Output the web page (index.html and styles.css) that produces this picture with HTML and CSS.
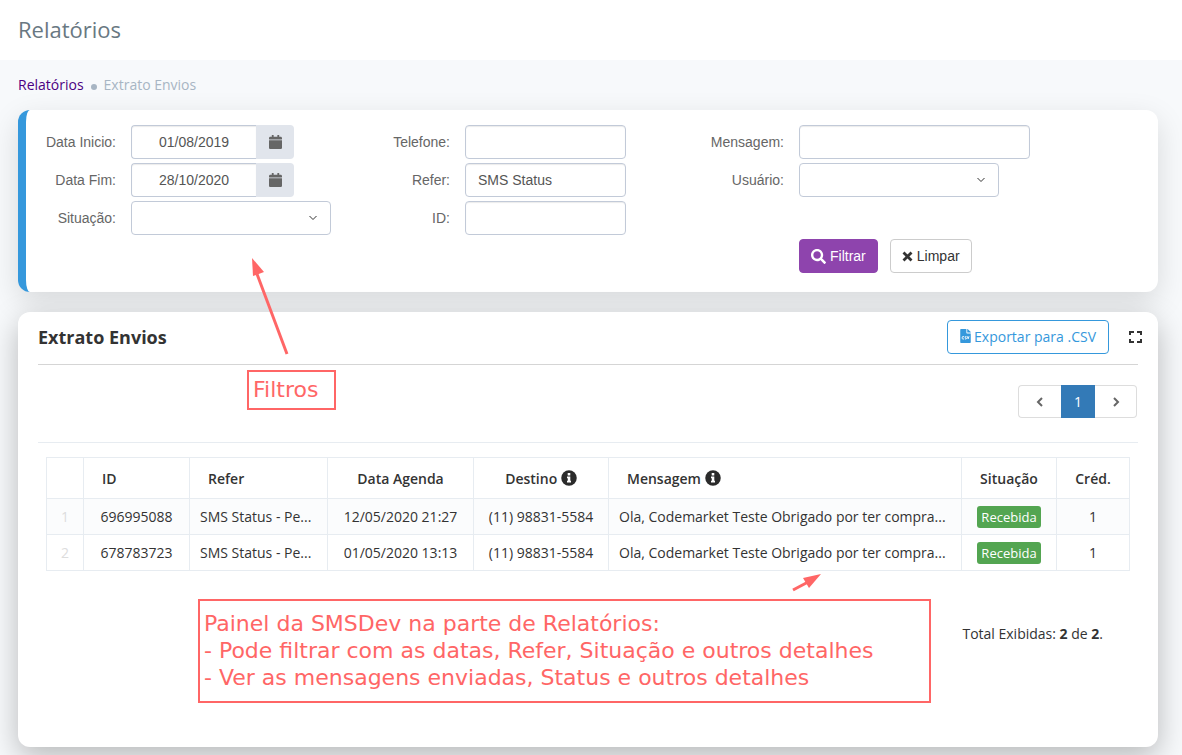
FILE: index.html
```
<!DOCTYPE html>
<html lang="pt-BR">
<head>
  <meta charset="UTF-8">
  <meta name="viewport" content="width=device-width, initial-scale=1.0">
  <title>Relatórios - Extrato Envios</title>
  <link rel="stylesheet" href="styles.css">
</head>
<body>
  <header class="page-head">
    <h1>Relatórios</h1>
  </header>

  <main class="page-content">
    <nav class="breadcrumb">
      <a href="#">Relatórios</a>
      <span class="dot"></span>
      <span>Extrato Envios</span>
    </nav>

    <form class="filter-panel">
      <div class="filter-col">
        <div class="form-row">
          <label for="dataInicio">Data Inicio:</label>
          <div class="input-group">
            <input type="text" id="dataInicio" value="01/08/2019">
            <button type="button" aria-label="Abrir calendário">
              <svg width="13" height="14" viewBox="0 0 448 512" preserveAspectRatio="none"><path d="M12 192h424c6.600 0 12 5.400 12 12v260c0 26.500-21.500 48-48 48H48c-26.500 0-48-21.500-48-48V204c0-6.600 5.400-12 12-12zm436-44v-36c0-26.500-21.500-48-48-48h-48V12c0-6.600-5.400-12-12-12h-40c-6.600 0-12 5.400-12 12v52H160V12c0-6.600-5.400-12-12-12h-40c-6.600 0-12 5.400-12 12v52H48C21.500 64 0 85.500 0 112v36c0 6.600 5.400 12 12 12h424c6.600 0 12-5.400 12-12z"/></svg>
            </button>
          </div>
        </div>
        <div class="form-row">
          <label for="dataFim">Data Fim:</label>
          <div class="input-group">
            <input type="text" id="dataFim" value="28/10/2020">
            <button type="button" aria-label="Abrir calendário">
              <svg width="13" height="14" viewBox="0 0 448 512" preserveAspectRatio="none"><path d="M12 192h424c6.600 0 12 5.400 12 12v260c0 26.500-21.500 48-48 48H48c-26.500 0-48-21.500-48-48V204c0-6.600 5.400-12 12-12zm436-44v-36c0-26.500-21.500-48-48-48h-48V12c0-6.600-5.400-12-12-12h-40c-6.600 0-12 5.400-12 12v52H160V12c0-6.600-5.400-12-12-12h-40c-6.600 0-12 5.400-12 12v52H48C21.500 64 0 85.500 0 112v36c0 6.600 5.400 12 12 12h424c6.600 0 12-5.400 12-12z"/></svg>
            </button>
          </div>
        </div>
        <div class="form-row">
          <label for="situacao">Situação:</label>
          <div class="select-wrap">
            <select id="situacao"><option></option></select>
            <svg class="caret" width="8" height="6" viewBox="0 0 8 6"><path d="M0.500 1l3.500 3.500L7.500 1"/></svg>
          </div>
        </div>
      </div>

      <div class="filter-col">
        <div class="form-row">
          <label for="telefone">Telefone:</label>
          <input class="text-input" type="text" id="telefone">
        </div>
        <div class="form-row">
          <label for="refer">Refer:</label>
          <input class="text-input" type="text" id="refer" value="SMS Status">
        </div>
        <div class="form-row">
          <label for="idEnvio">ID:</label>
          <input class="text-input" type="text" id="idEnvio">
        </div>
      </div>

      <div class="filter-col">
        <div class="form-row">
          <label for="mensagem">Mensagem:</label>
          <input class="text-input wide" type="text" id="mensagem">
        </div>
        <div class="form-row">
          <label for="usuario">Usuário:</label>
          <div class="select-wrap">
            <select id="usuario"><option></option></select>
            <svg class="caret" width="8" height="6" viewBox="0 0 8 6"><path d="M0.500 1l3.500 3.500L7.500 1"/></svg>
          </div>
        </div>
        <div class="filter-actions">
          <button type="submit" class="btn btn-filter">
            <svg width="15" height="15" viewBox="0 0 512 512"><path d="M505 442.700L405.300 343c-4.500-4.500-10.600-7-17-7H372c27.600-35.300 44-79.700 44-128C416 93.100 322.900 0 208 0S0 93.100 0 208s93.100 208 208 208c48.300 0 92.700-16.400 128-44v16.300c0 6.400 2.500 12.500 7 17l99.700 99.700c9.400 9.400 24.600 9.400 33.900 0l28.300-28.300c9.400-9.400 9.400-24.600.1-34zM208 336c-70.700 0-128-57.200-128-128 0-70.700 57.200-128 128-128 70.700 0 128 57.200 128 128 0 70.700-57.200 128-128 128z"/></svg>
            Filtrar
          </button>
          <button type="reset" class="btn btn-clear">
            <svg width="11" height="11" viewBox="0 0 11 11"><path d="M1.500 1.500l8 8M9.500 1.500l-8 8" fill="none" stroke="currentColor" stroke-width="2.800"/></svg>
            Limpar
          </button>
        </div>
      </div>
    </form>

    <section class="report-panel">
      <div class="report-head">
        <h2>Extrato Envios</h2>
        <div class="report-tools">
          <button type="button" class="btn btn-export">
            <svg width="11" height="14" viewBox="0 0 384 512"><path fill="#3598dc" d="M224 136V0H24C10.700 0 0 10.700 0 24v464c0 13.300 10.700 24 24 24h336c13.300 0 24-10.700 24-24V160H248c-13.200 0-24-10.800-24-24zM384 122v6H256V0h6.100c6.400 0 12.500 2.500 17 7l97.900 98c4.500 4.500 7 10.600 7 17z"/><path fill="none" stroke="#fff" stroke-width="34" d="M140 280H92q-20 0-20 20v44q0 20 20 20h48M226 280h-36q-18 0-18 20t18 22h16q20 0 20 22t-20 20h-34M256 266l32 94 32-94"/></svg>
            Exportar para .CSV
          </button>
          <button type="button" class="btn-expand" aria-label="Tela cheia">
            <svg width="13" height="12" viewBox="0 0 13 12"><path d="M1 4V1h4M8 1h4v3M12 8v3H8M5 11H1V8" fill="none" stroke="#333" stroke-width="2"/></svg>
          </button>
        </div>
      </div>

      <nav class="pager" aria-label="Paginação">
        <a href="#" aria-label="Anterior"><svg width="8" height="10" viewBox="0 0 8 10"><path d="M6 1L2 5l4 4"/></svg></a>
        <a href="#" class="active">1</a>
        <a href="#" aria-label="Próxima"><svg width="8" height="10" viewBox="0 0 8 10"><path d="M2 1l4 4-4 4"/></svg></a>
      </nav>

      <table class="report-table">
        <colgroup>
          <col class="col-num">
          <col class="col-id">
          <col class="col-refer">
          <col class="col-data">
          <col class="col-destino">
          <col>
          <col class="col-situacao">
          <col class="col-cred">
        </colgroup>
        <thead>
          <tr>
            <th></th>
            <th class="left">ID</th>
            <th class="left">Refer</th>
            <th>Data Agenda</th>
            <th>Destino <svg class="info" width="16" height="16" viewBox="0 0 16 16"><circle cx="8" cy="8" r="7.750" fill="#2b2b2b"/><path fill="#fff" d="M6.700 3h2.600v2.400H6.700zM6 6.500h3.300v4.300H10v1.700H6v-1.700h.800V8.200H6z"/></svg></th>
            <th class="left">Mensagem <svg class="info" width="16" height="16" viewBox="0 0 16 16"><circle cx="8" cy="8" r="7.750" fill="#2b2b2b"/><path fill="#fff" d="M6.700 3h2.600v2.400H6.700zM6 6.500h3.300v4.300H10v1.700H6v-1.700h.800V8.200H6z"/></svg></th>
            <th>Situação</th>
            <th>Créd.</th>
          </tr>
        </thead>
        <tbody>
          <tr>
            <td class="num">1</td>
            <td>696995088</td>
            <td class="left">SMS Status - Pe...</td>
            <td>12/05/2020 21:27</td>
            <td>(11) 98831-5584</td>
            <td class="left">Ola, Codemarket Teste Obrigado por ter compra...</td>
            <td><span class="label-ok">Recebida</span></td>
            <td>1</td>
          </tr>
          <tr>
            <td class="num">2</td>
            <td>678783723</td>
            <td class="left">SMS Status - Pe...</td>
            <td>01/05/2020 13:13</td>
            <td>(11) 98831-5584</td>
            <td class="left">Ola, Codemarket Teste Obrigado por ter compra...</td>
            <td><span class="label-ok">Recebida</span></td>
            <td>1</td>
          </tr>
        </tbody>
      </table>

      <p class="total">Total Exibidas: <b>2</b> de <b>2</b>.</p>
    </section>
  </main>

  <!-- Notes over the page -->
  <svg class="arrow arrow-filters" width="40" height="98" viewBox="0 0 40 98"><path d="M37 96L7 16" stroke="#f66" stroke-width="3"/><path d="M2 0l12 14-11 4z" fill="#f66"/></svg>
  <div class="note note-filters">Filtros</div>
  <svg class="arrow arrow-table" width="30" height="20" viewBox="0 0 30 20"><path d="M1 17l17-9" stroke="#f66" stroke-width="3"/><path d="M29 1L11 5l6 10z" fill="#f66"/></svg>
  <div class="note note-table">Painel da SMSDev na parte de Relatórios:<br>- Pode filtrar com as datas, Refer, Situação e outros detalhes<br>- Ver as mensagens enviadas, Status e outros detalhes</div>
</body>
</html>
```
FILE: styles.css
```
* {
  box-sizing: border-box;
  margin: 0;
  padding: 0;
}

body {
  position: relative;
  font-family: 'Open Sans', sans-serif;
  font-size: 14px;
  line-height: 20px;
  color: #333;
  background: #f7f9fb;
}

button, input, select {
  font-family: 'Liberation Sans', Arial, sans-serif;
  font-size: 14px;
}

button {
  cursor: pointer;
}

.page-head {
  display: flex;
  align-items: center;
  height: 60px;
  padding: 0 18px 2px;
  background: #fff;
}

.page-head h1 {
  font-size: 22px;
  font-weight: 400;
  color: #697882;
}

.page-content {
  padding: 15px 24px 8px 18px;
}

.breadcrumb {
  display: flex;
  align-items: center;
  gap: 7px;
  margin-bottom: 15px;
  color: #a7b5c3;
}

.breadcrumb a {
  color: #4b0082;
  text-decoration: none;
}

.breadcrumb .dot {
  width: 6px;
  height: 6px;
  margin-top: 4px;
  border-radius: 50%;
  background: #a7b5c3;
}

/* Filters */
.filter-panel {
  display: grid;
  grid-template-columns: repeat(3, minmax(0, 1fr));
  padding: 15px 130px 19px 0;
  margin-bottom: 20px;
  background: #fff;
  border-left: 8px solid #3598dc;
  border-radius: 12px;
  box-shadow: 0 10px 30px rgba(0, 0, 0, 0.13);
}

.filter-col {
  display: flex;
  flex-direction: column;
  gap: 4px;
}

.form-row {
  display: flex;
  align-items: center;
  gap: 15px;
}

.form-row label {
  width: 90px;
  flex: none;
  text-align: right;
  font-family: 'Liberation Sans', Arial, sans-serif;
  color: #666;
}

.text-input, .input-group input, select {
  height: 34px;
  padding: 6px 12px;
  color: #555;
  background: #fff;
  border: 1px solid #c2cad8;
  border-radius: 4px;
}

.text-input, .input-group input {
  box-shadow: inset 0 1px 1px rgba(0, 0, 0, 0.08);
}

.text-input {
  width: 161px;
}

.text-input.wide {
  width: 231px;
  flex: none;
}

.input-group {
  display: flex;
}

.input-group input {
  width: 125px;
  text-align: center;
  border-right: none;
  border-radius: 4px 0 0 4px;
}

.input-group button {
  display: flex;
  align-items: center;
  justify-content: center;
  width: 38px;
  background: #e1e5ec;
  border: none;
  border-radius: 0 4px 4px 0;
}

.input-group svg {
  fill: #666;
}

.select-wrap {
  position: relative;
  display: flex;
}

select {
  width: 200px;
  appearance: none;
}

.caret {
  position: absolute;
  top: 14px;
  right: 14px;
  pointer-events: none;
  fill: none;
  stroke: #333;
}

.filter-actions {
  display: flex;
  gap: 12px;
  margin-top: 38px;
  padding-left: 105px;
}

.btn {
  display: flex;
  align-items: center;
  gap: 4px;
  height: 34px;
  padding: 0 11px;
  border: 1px solid transparent;
  border-radius: 4px;
  background: #fff;
  white-space: nowrap;
}

.btn-filter {
  color: #fff;
  background: #8e44ad;
  border-color: #8e44ad;
}

.btn-filter svg {
  fill: #fff;
}

.btn-clear {
  color: #333;
  border-color: #ccc;
}

/* Report */
.report-panel {
  padding: 0 20px 103px;
  background: #fff;
  border-radius: 12px;
  box-shadow: 0 10px 30px rgba(0, 0, 0, 0.26);
}

.report-head {
  display: flex;
  align-items: center;
  justify-content: space-between;
  height: 53px;
  padding-bottom: 2px;
  border-bottom: 1px solid #d5d5d5;
}

.report-head h2 {
  font-size: 18px;
  font-weight: 700;
}

.report-tools {
  display: flex;
  align-items: center;
  gap: 20px;
}

.btn-export {
  gap: 3px;
  padding: 0 12px 2px;
  font-family: 'Open Sans', sans-serif;
  color: #3598dc;
  border-color: #3598dc;
}

.btn-expand {
  display: flex;
  width: 9px;
  border: none;
  background: none;
}

.btn-expand svg {
  flex: none;
}

.pager {
  display: flex;
  justify-content: flex-end;
  padding: 20px 1px 24px 0;
  border-bottom: 1px solid #e7ecf1;
}

.pager a {
  display: flex;
  align-items: center;
  justify-content: center;
  width: 43px;
  height: 33px;
  border: 1px solid #ddd;
  color: #666;
  text-decoration: none;
}

.pager a:first-child {
  border-right: none;
  border-radius: 4px 0 0 4px;
}

.pager a:last-child {
  width: 42px;
  border-left: none;
  border-radius: 0 4px 4px 0;
}

.pager a.active {
  width: 34px;
  color: #fff;
  background: #337ab7;
  border-color: #337ab7;
}

.pager svg {
  fill: none;
  stroke: #666;
  stroke-width: 2;
}

.report-table {
  width: calc(100% - 16px);
  margin: 14px 8px 0;
  table-layout: fixed;
  border-collapse: collapse;
}

.report-table th, .report-table td {
  height: 36px;
  border: 1px solid #e7ecf1;
  text-align: center;
  white-space: nowrap;
}

.report-table th {
  height: 41px;
  padding-top: 2px;
  font-weight: 600;
}

.report-table th.left {
  padding-left: 18px;
  text-align: left;
}

.report-table td.left {
  padding-left: 10px;
  text-align: left;
}

.report-table tbody tr:nth-child(odd) {
  background: #fbfcfd;
}

.report-table td.num {
  color: #ddd;
}

.col-num { width: 37px; }
.col-id { width: 106px; }
.col-refer { width: 138px; }
.col-data { width: 146px; }
.col-destino { width: 135px; }
.col-situacao { width: 95px; }
.col-cred { width: 73px; }

.info {
  vertical-align: -2px;
}

.label-ok {
  display: inline-block;
  height: 22px;
  padding: 0 4px;
  font-size: 13px;
  line-height: 22px;
  vertical-align: middle;
  color: #fff;
  background: #53a551;
  border-radius: 3px;
}

.total {
  margin-top: 53px;
  padding-right: 35px;
  text-align: right;
}

/* Notes */
.note {
  position: absolute;
  padding: 0 4px;
  font-family: Verdana, 'DejaVu Sans', sans-serif;
  font-size: 22px;
  line-height: 27px;
  color: #f66;
  border: 2px solid #f66;
}

.note-filters {
  left: 247px;
  top: 370px;
  width: 89px;
  height: 40px;
  padding-top: 4px;
}

.note-table {
  left: 198px;
  top: 599px;
  width: 733px;
  height: 104px;
  padding-top: 9px;
}

.arrow {
  position: absolute;
}

.arrow-filters {
  left: 250px;
  top: 258px;
}

.arrow-table {
  left: 792px;
  top: 573px;
}
```
